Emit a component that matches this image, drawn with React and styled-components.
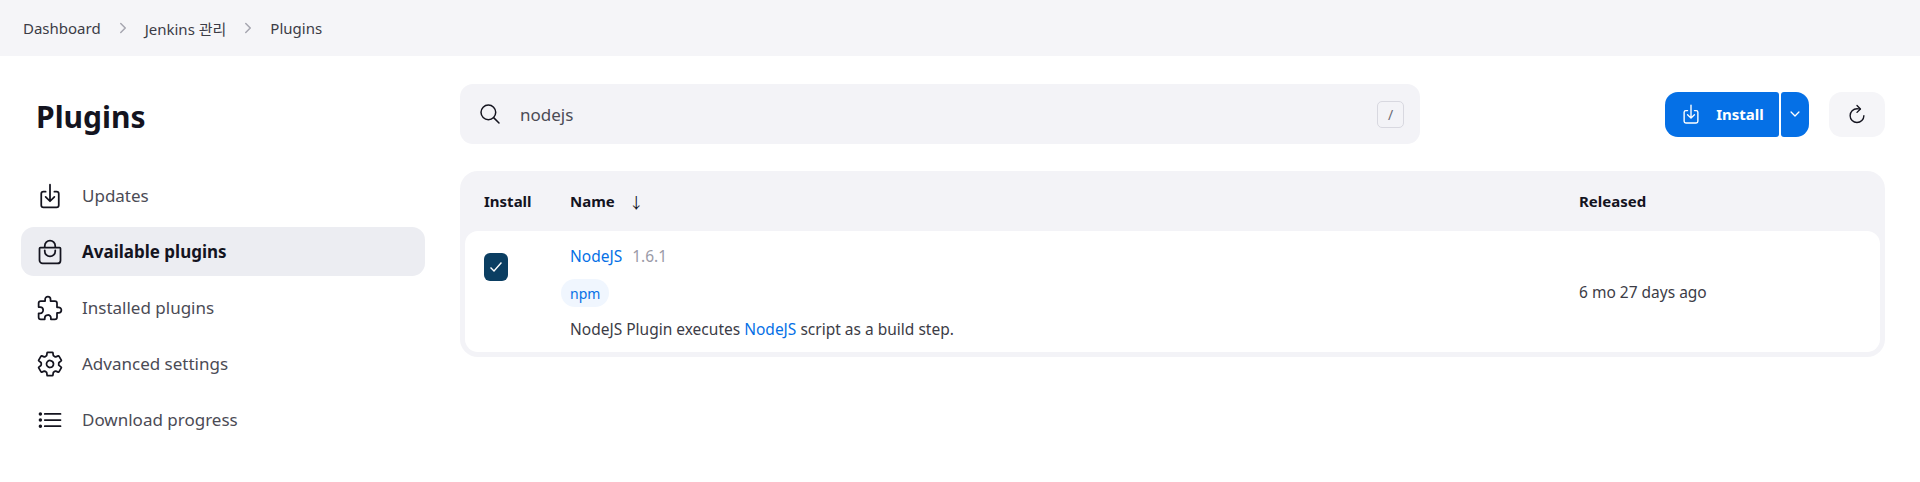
import React from 'react'
import styled, { createGlobalStyle } from 'styled-components'
import {
  IoBagHandleOutline,
  IoCheckmarkSharp,
  IoChevronDown,
  IoChevronForward,
  IoDownloadOutline,
  IoExtensionPuzzleOutline,
  IoListOutline,
  IoRefreshOutline,
  IoSearchOutline,
  IoSettingsOutline,
} from 'react-icons/io5'

const GlobalStyle = createGlobalStyle`
  body {
    margin: 0;
    background: #fff;
    color: #14141f;
    font-family: 'Noto Sans', 'Noto Sans CJK KR', sans-serif;
    font-size: 16px;
  }
`

const menu = [
  { label: 'Updates', icon: IoDownloadOutline },
  { label: 'Available plugins', icon: IoBagHandleOutline, active: true },
  { label: 'Installed plugins', icon: IoExtensionPuzzleOutline },
  { label: 'Advanced settings', icon: IoSettingsOutline },
  { label: 'Download progress', icon: IoListOutline },
]

const App = () => {
  return (
    <>
      <GlobalStyle />
      <Breadcrumbs>
        <span>Dashboard</span>
        <IoChevronForward />
        <span>Jenkins 관리</span>
        <IoChevronForward />
        <span>Plugins</span>
      </Breadcrumbs>
      <Page>
        <Sidebar>
          <Title>Plugins</Title>
          <Menu>
            {menu.map(({ label, icon: Icon, active }) => {
              return (
                <MenuItem key={label} $active={active}>
                  <Icon />
                  {label}
                </MenuItem>
              )
            })}
          </Menu>
        </Sidebar>
        <Main>
          <Toolbar>
            <Search>
              <IoSearchOutline />
              <SearchText>nodejs</SearchText>
              <Key>/</Key>
            </Search>
            <Actions>
              <InstallButton>
                <IoDownloadOutline />
                Install
              </InstallButton>
              <CaretButton>
                <IoChevronDown />
              </CaretButton>
              <RefreshButton>
                <IoRefreshOutline />
              </RefreshButton>
            </Actions>
          </Toolbar>
          <Table>
            <HeadRow>
              <span>Install</span>
              <NameHead>
                Name <span>↓</span>
              </NameHead>
              <span>Released</span>
            </HeadRow>
            <Row>
              <Checkbox>
                <IoCheckmarkSharp />
              </Checkbox>
              <Details>
                <NameLine>
                  <BlueLink>NodeJS</BlueLink>
                  <Version>1.6.1</Version>
                </NameLine>
                <Tag>npm</Tag>
                <Description>
                  NodeJS Plugin executes <BlueLink>NodeJS</BlueLink> script as a
                  build step.
                </Description>
              </Details>
              <Released>6 mo 27 days ago</Released>
            </Row>
          </Table>
        </Main>
      </Page>
    </>
  )
}

const Breadcrumbs = styled.nav`
  height: 56px;
  box-sizing: border-box;
  padding-left: 23px;
  display: flex;
  align-items: center;
  background: #f5f5f8;
  color: #3c3c46;
  font-size: 15px;
  svg {
    width: 16px;
    height: 16px;
    margin: 0 14px;
    color: #a6a6b0;
  }
`

const Page = styled.div`
  display: flex;
  gap: 35px;
  padding: 28px 35px 0 21px;
`

const Sidebar = styled.aside`
  width: 404px;
  flex-shrink: 0;
`

const Title = styled.h1`
  margin: 0;
  padding: 8px 0 0 15px;
  height: 62px;
  box-sizing: border-box;
  font-size: 30px;
  line-height: 50px;
  font-weight: 700;
`

const Menu = styled.div`
  display: flex;
  flex-direction: column;
  gap: 7px;
  margin-top: 25px;
`

const MenuItem = styled.a`
  height: 49px;
  display: flex;
  align-items: center;
  gap: 18px;
  padding-left: 15px;
  border-radius: 13px;
  font-size: 17px;
  font-weight: ${(p) => (p.$active ? 700 : 400)};
  color: ${(p) => (p.$active ? '#14141f' : '#4b4b55')};
  background: ${(p) => (p.$active ? '#ecedf2' : 'transparent')};
  svg {
    width: 28px;
    height: 28px;
    color: #14141f;
  }
`

const Main = styled.main`
  flex: 1;
`

const Toolbar = styled.div`
  display: flex;
  align-items: center;
  justify-content: space-between;
`

const Search = styled.div`
  width: 960px;
  height: 60px;
  box-sizing: border-box;
  padding: 0 16px 0 18px;
  display: flex;
  align-items: center;
  gap: 18px;
  background: #f3f3f7;
  border-radius: 13px;
  svg {
    width: 24px;
    height: 24px;
  }
`

const SearchText = styled.span`
  flex: 1;
  color: #4b4b55;
  font-size: 17px;
`

const Key = styled.span`
  width: 27px;
  height: 27px;
  box-sizing: border-box;
  display: flex;
  align-items: center;
  justify-content: center;
  border: 1px solid #d8d8e0;
  border-radius: 5px;
  color: #6b6b75;
  font-size: 14px;
`

const Actions = styled.div`
  display: flex;
  align-items: center;
`

const BlueButton = styled.button`
  height: 45px;
  border: 0;
  padding: 0;
  display: flex;
  align-items: center;
  justify-content: center;
  background: #0570e6;
  color: #fff;
  font-family: inherit;
`

const InstallButton = styled(BlueButton)`
  width: 114px;
  gap: 14px;
  border-radius: 13px 3px 3px 13px;
  font-size: 15px;
  font-weight: 700;
  svg {
    width: 22px;
    height: 22px;
  }
`

const CaretButton = styled(BlueButton)`
  width: 28px;
  margin-left: 2px;
  border-radius: 3px 13px 13px 3px;
  svg {
    width: 14px;
    height: 14px;
  }
`

const RefreshButton = styled.button`
  width: 56px;
  height: 45px;
  margin-left: 20px;
  border: 0;
  padding: 0;
  display: flex;
  align-items: center;
  justify-content: center;
  background: #f5f5f8;
  border-radius: 13px;
  color: #14141f;
  svg {
    width: 22px;
    height: 22px;
  }
`

const Table = styled.div`
  margin-top: 27px;
  padding: 0 5px 5px;
  background: #f3f3f7;
  border-radius: 18px;
`

const columns = `
  display: grid;
  grid-template-columns: 86px 1009px 1fr;
`

const HeadRow = styled.div`
  ${columns}
  height: 60px;
  align-items: center;
  padding-left: 19px;
  font-size: 15px;
  font-weight: 700;
`

const NameHead = styled.span`
  display: flex;
  gap: 14px;
  span {
    font-weight: 400;
  }
`

const Row = styled.div`
  ${columns}
  height: 121px;
  padding-left: 19px;
  background: #fff;
  border-radius: 13px;
`

const Checkbox = styled.span`
  width: 24px;
  height: 28px;
  margin-top: 22px;
  display: flex;
  align-items: center;
  justify-content: center;
  background: #0b3e62;
  border-radius: 6px;
  color: #fff;
  svg {
    width: 16px;
    height: 16px;
  }
`

const Details = styled.div`
  display: flex;
  flex-direction: column;
  align-items: flex-start;
  padding-top: 12px;
  font-size: 15.5px;
`

const NameLine = styled.div`
  display: flex;
  gap: 10px;
  line-height: 26px;
`

const BlueLink = styled.a`
  color: #0570e6;
`

const Version = styled.span`
  color: #9b9ba8;
`

const Tag = styled.span`
  height: 28px;
  margin: 10px 0 9px -9px;
  padding: 0 9px;
  display: flex;
  align-items: center;
  background: #f0f6fe;
  border-radius: 14px;
  color: #0570e6;
  font-size: 14px;
`

const Description = styled.div`
  color: #3c3c46;
  line-height: 26px;
`

const Released = styled.span`
  align-self: center;
  color: #3c3c46;
  font-size: 15.5px;
`

export default App
